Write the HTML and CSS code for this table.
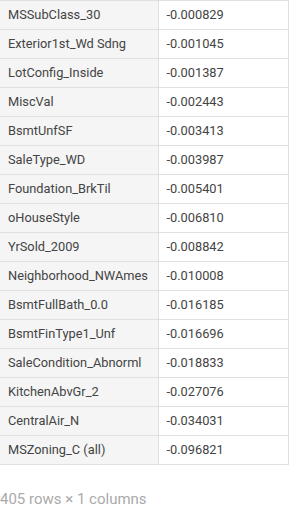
FILE: index.html
```html
<!DOCTYPE html>
<html>
<head>
<meta charset="utf-8">
<link rel="stylesheet" href="styles.css">
</head>
<body>
<table class="df">
<tbody>
<tr><th>MSSubClass_30</th><td>-0.000829</td></tr>
<tr><th>Exterior1st_Wd Sdng</th><td>-0.001045</td></tr>
<tr><th>LotConfig_Inside</th><td>-0.001387</td></tr>
<tr><th>MiscVal</th><td>-0.002443</td></tr>
<tr><th>BsmtUnfSF</th><td>-0.003413</td></tr>
<tr><th>SaleType_WD</th><td>-0.003987</td></tr>
<tr><th>Foundation_BrkTil</th><td>-0.005401</td></tr>
<tr><th>oHouseStyle</th><td>-0.006810</td></tr>
<tr><th>YrSold_2009</th><td>-0.008842</td></tr>
<tr><th>Neighborhood_NWAmes</th><td>-0.010008</td></tr>
<tr><th>BsmtFullBath_0.0</th><td>-0.016185</td></tr>
<tr><th>BsmtFinType1_Unf</th><td>-0.016696</td></tr>
<tr><th>SaleCondition_Abnorml</th><td>-0.018833</td></tr>
<tr><th>KitchenAbvGr_2</th><td>-0.027076</td></tr>
<tr><th>CentralAir_N</th><td>-0.034031</td></tr>
<tr><th>MSZoning_C (all)</th><td>-0.096821</td></tr>
</tbody>
</table>
<p class="shape">405 rows × 1 columns</p>
</body>
</html>
```
FILE: styles.css
```css
html, body {
  margin: 0;
  padding: 0;
  background: #fff;
}
body {
  font-family: Roboto, "Liberation Sans", sans-serif;
  font-size: 12.8px;
  color: #444;
}
.df {
  border-collapse: collapse;
  width: 289px;
  table-layout: fixed;
}
.df th, .df td {
  padding: 0 8px;
  line-height: 28px;
  border: 1px solid #e0e0e0;
  text-align: left;
  font-weight: normal;
  white-space: nowrap;
  vertical-align: middle;
}
.df th {
  background: #f5f5f5;
  width: 158px;
  box-sizing: border-box;
  border-left: none;
}
.df td {
  background: #fff;
}
.shape {
  margin: 24px 0 0 0;
  color: #aaa;
  font-size: 15px;
  line-height: 20px;
}
```
